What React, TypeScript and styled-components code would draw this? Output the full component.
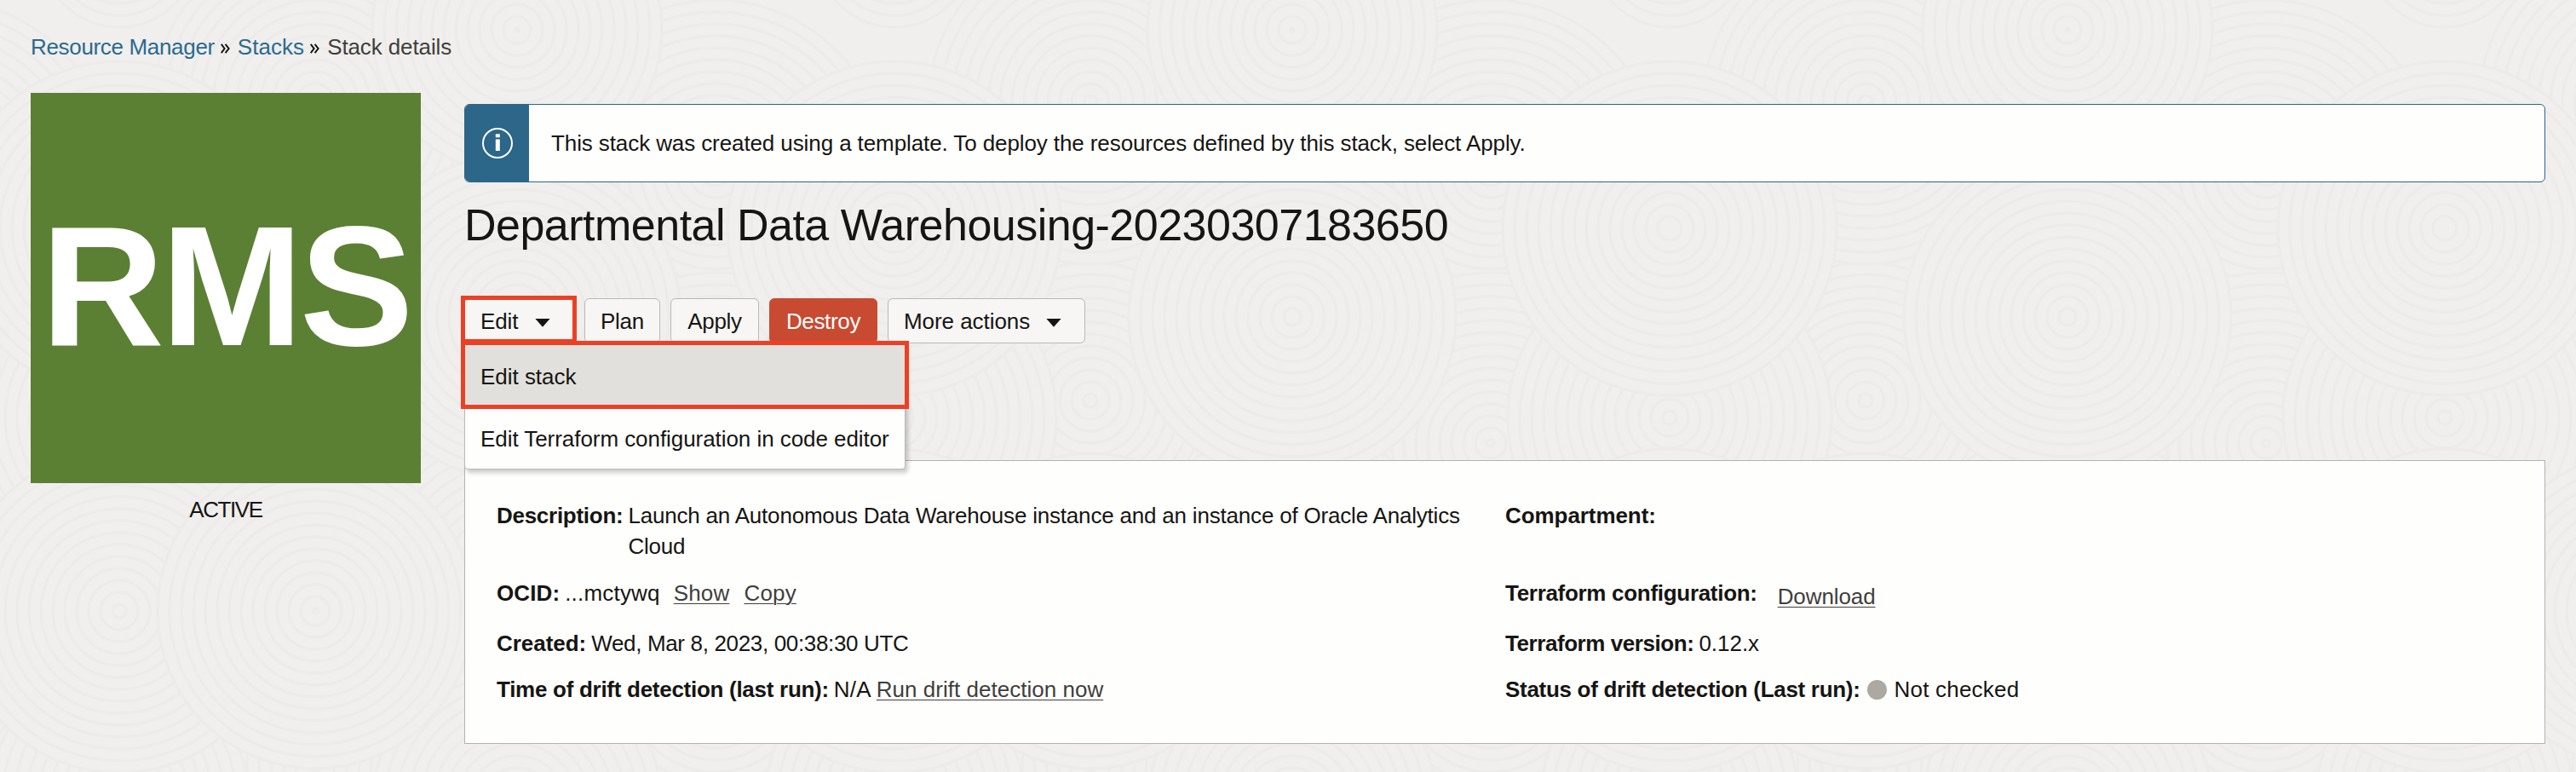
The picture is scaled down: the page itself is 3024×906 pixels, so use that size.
import React from 'react';
import styled, { createGlobalStyle, css } from 'styled-components';

const GlobalStyle = createGlobalStyle`
  *, *::before, *::after { box-sizing: border-box; }
  body {
    margin: 0;
    background: #f0efed;
    color: #161513;
    font-family: "Liberation Sans", Arial, sans-serif;
    font-size: 26px;
    line-height: 36px;
    white-space: nowrap;
  }
`;

const Page = styled.div`
  position: relative;
  isolation: isolate;
  min-height: 906px;
  padding: 37px 36px 33px;
  overflow: hidden;
`;

const Texture = styled.svg`
  position: absolute;
  inset: 0;
  width: 100%;
  height: 100%;
  z-index: -1;
`;

const Text = styled.span<{ $ls?: number }>`
  letter-spacing: ${(p) => p.$ls ?? 0}px;
`;

/* Breadcrumbs */
const Breadcrumbs = styled.nav`
  display: flex;
  align-items: center;
  height: 36px;
`;

const Crumb = styled(Text)<{ $current?: boolean }>`
  color: ${(p) => (p.$current ? '#403e3c' : '#2b6a8f')};
`;

const CrumbArrow = styled.svg`
  width: 11px;
  height: 12px;
  margin: 4px 9px 0 7px;
`;

/* Page columns */
const Columns = styled.div`
  display: flex;
  align-items: flex-start;
  gap: 51px;
  margin-top: 36px;
`;

const Side = styled.aside`
  flex: 0 0 458px;
  text-align: center;
`;

const Badge = styled.div`
  display: flex;
  align-items: center;
  height: 458px;
  padding: 0 0 5px 12px;
  background: #5b8034;
  color: #fff;
  font-weight: 700;
  font-size: 200.5px;
  line-height: 1;
  letter-spacing: -4px;
`;

const State = styled(Text)`
  display: block;
  margin-top: 13px;
`;

const Main = styled.main`
  flex: 1;
  margin-top: 13px;
`;

/* Banner */
const Banner = styled.div`
  display: flex;
  height: 92px;
  border: 1px solid #2c6688;
  border-radius: 6px;
  background: #fefefc;
  overflow: hidden;
`;

const BannerIcon = styled.div`
  display: flex;
  align-items: center;
  justify-content: center;
  width: 75px;
  background: #2c6688;
`;

const BannerText = styled(Text)`
  align-self: center;
  padding-left: 26px;
`;

const Title = styled.h1`
  margin: 20px 0 0;
  font-size: 52px;
  line-height: 60px;
  font-weight: 400;
  letter-spacing: -0.51px;
`;

/* Toolbar */
const Toolbar = styled.div`
  position: relative;
  z-index: 1;
  display: flex;
  gap: 12px;
  margin-top: 56px;
`;

const Button = styled.button<{ $width: number; $ls?: number; $danger?: boolean; $menu?: boolean }>`
  display: flex;
  align-items: center;
  justify-content: center;
  width: ${(p) => p.$width}px;
  height: 53px;
  padding: 1px 0 0;
  border: 1px solid #bbb8b5;
  border-radius: 6px;
  background: #f7f6f4;
  color: inherit;
  font: inherit;
  letter-spacing: ${(p) => p.$ls ?? 0}px;
  ${(p) => p.$menu && css`
    justify-content: space-between;
    padding: 1px 27px 0 18px;
  `}
  ${(p) => p.$danger && css`
    border-color: #c74a31;
    background: #c74a31;
    color: #fff;
  `}
`;

const Caret = styled.svg`
  width: 18px;
  height: 10px;
  margin-top: 3px;
`;

const Highlight = styled.div<{ $top: number; $width: number; $height: number }>`
  position: absolute;
  left: -4px;
  top: ${(p) => p.$top}px;
  width: ${(p) => p.$width}px;
  height: ${(p) => p.$height}px;
  border: 5px solid #ec4025;
`;

const Menu = styled.div`
  position: absolute;
  left: 0;
  top: 54px;
  width: 518px;
  height: 147px;
  border: 1px solid #bbb8b5;
  border-radius: 0 0 4px 4px;
  background: #fefefc;
  box-shadow: 3px 4px 5px rgba(0, 0, 0, 0.2);
  overflow: hidden;
`;

const MenuItem = styled(Text)<{ $active?: boolean }>`
  display: flex;
  align-items: center;
  height: 73px;
  padding-left: 18px;
  background: ${(p) => (p.$active ? '#e2e0dc' : 'transparent')};
`;

/* Details */
const Panel = styled.section`
  display: grid;
  grid-template-columns: 1184px 1fr;
  grid-template-rows: 91px 59px 54px 36px;
  height: 333px;
  margin-top: 137px;
  padding: 46px 35px 0 37px;
  border: 1px solid #b5b2af;
  background: #fefefc;
`;

const Field = styled.div`
  display: flex;
  align-items: flex-start;
  gap: 6px;
`;

const Label = styled(Text)`
  font-weight: 700;
`;

const Value = styled(Text)`
  max-width: 1010px;
  white-space: normal;
`;

const Link = styled.a<{ $ls?: number; $before?: number; $drop?: number }>`
  margin-left: ${(p) => p.$before ?? 0}px;
  margin-top: ${(p) => p.$drop ?? 0}px;
  color: #403e3c;
  letter-spacing: ${(p) => p.$ls ?? 0}px;
  text-decoration: underline;
  text-decoration-thickness: 1px;
  text-underline-offset: 3px;
`;

const Dot = styled.span`
  width: 23px;
  height: 23px;
  margin: 7px 3px 0 2px;
  border-radius: 50%;
  background: #aea8a2;
`;

const TILE = 910;
const DISCS: [number, number, number][] = [
  [370, 470, 190], [840, 200, 200], [840, 520, 200], [370, 120, 190],
  [840, 800, 190], [607, 690, 190], [370, 895, 150], [140, 930, 150],
  [607, 35, 170], [607, 945, 170], [140, -60, 92], [140, 490, 190],
  [607, 372, 192], [140, 268, 196], [140, 717, 190], [370, 717, 185],
];

const Backdrop = () => (
  <Texture aria-hidden="true">
    <defs>
      <pattern id="rings" width={TILE} height={TILE} patternUnits="userSpaceOnUse">
        {DISCS.map(([cx, cy, r], i) => (
          <g key={i} fill="none" stroke="#ecebe9" strokeWidth="3">
            {[-TILE, 0, TILE].map((dx) => (
              <g key={dx}>
                <circle cx={cx + dx} cy={cy} r={r} fill="#f0efed" />
                {Array.from({ length: Math.floor(r / 14) }, (_, n) => (
                  <circle key={n} cx={cx + dx} cy={cy} r={r - 14 * (n + 1)} />
                ))}
              </g>
            ))}
          </g>
        ))}
      </pattern>
    </defs>
    <rect width="100%" height="100%" fill="url(#rings)" />
  </Texture>
);

const Arrow = () => (
  <CrumbArrow viewBox="0 0 11 12" fill="none" stroke="#161513" strokeWidth="2">
    <path d="M0.8 0.8 4.6 6 0.8 11.2M5.6 0.8 9.6 6 5.6 11.2" />
  </CrumbArrow>
);

const DownCaret = () => (
  <Caret viewBox="0 0 18 10" fill="#161513">
    <path d="M0.4 0H17.6L9 9.8Z" />
  </Caret>
);

const InfoIcon = () => (
  <svg width="38" height="38" viewBox="0 0 38 38" fill="none">
    <circle cx="19" cy="19" r="17" stroke="#fff" strokeWidth="2" />
    <path d="M16.8 8.2h5v4h-5zM16.8 14.6h5V28h-5z" fill="#fff" />
  </svg>
);

export default function App() {
  return (
    <>
      <GlobalStyle />
      <Page>
        <Backdrop />
        <Breadcrumbs>
          <Crumb $ls={-0.33}>Resource Manager</Crumb>
          <Arrow />
          <Crumb $ls={0.05}>Stacks</Crumb>
          <Arrow />
          <Crumb $current $ls={-0.11}>Stack details</Crumb>
        </Breadcrumbs>
        <Columns>
          <Side>
            <Badge>RMS</Badge>
            <State $ls={-1.4}>ACTIVE</State>
          </Side>
          <Main>
            <Banner>
              <BannerIcon><InfoIcon /></BannerIcon>
              <BannerText $ls={-0.1}>
                This stack was created using a template. To deploy the resources defined by this stack, select Apply.
              </BannerText>
            </Banner>
            <Title>Departmental Data Warehousing-20230307183650</Title>
            <Toolbar>
              <Button $width={129} $menu $ls={-0.09}>Edit<DownCaret /></Button>
              <Button $width={89} $ls={-0.29}>Plan</Button>
              <Button $width={104} $ls={-0.33}>Apply</Button>
              <Button $width={127} $danger $ls={-0.35}>Destroy</Button>
              <Button $width={232} $menu $ls={-0.06}>More actions<DownCaret /></Button>
              <Menu>
                <MenuItem $active $ls={-0.03}>Edit stack</MenuItem>
                <MenuItem $ls={-0.058}>Edit Terraform configuration in code editor</MenuItem>
              </Menu>
              <Highlight $top={-3} $width={136} $height={56} />
              <Highlight $top={50} $width={526} $height={80} />
            </Toolbar>
            <Panel>
              <Field>
                <Label $ls={-0.275}>Description:</Label>
                <Value $ls={-0.195}>
                  Launch an Autonomous Data Warehouse instance and an instance of Oracle Analytics<br />Cloud
                </Value>
              </Field>
              <Field>
                <Label $ls={-0.07}>Compartment:</Label>
              </Field>
              <Field>
                <Label $ls={0.1}>OCID:</Label>
                <Value $ls={0.2}>...mctywq</Value>
                <Link $before={10} $ls={0.15}>Show</Link>
                <Link $before={11} $ls={0.2}>Copy</Link>
              </Field>
              <Field>
                <Label $ls={-0.3}>Terraform configuration:</Label>
                <Link $before={18} $drop={4} $ls={-0.1}>Download</Link>
              </Field>
              <Field>
                <Label $ls={-0.04}>Created:</Label>
                <Value $ls={-0.34}>Wed, Mar 8, 2023, 00:38:30 UTC</Value>
              </Field>
              <Field>
                <Label $ls={-0.435}>Terraform version:</Label>
                <Value $ls={-0.04}>0.12.x</Value>
              </Field>
              <Field>
                <Label $ls={-0.28}>Time of drift detection (last run):</Label>
                <Value $ls={0.2}>N/A</Value>
                <Link $ls={0.02}>Run drift detection now</Link>
              </Field>
              <Field>
                <Label $ls={-0.297}>Status of drift detection (Last run):</Label>
                <Dot />
                <Value $ls={0.2}>Not checked</Value>
              </Field>
            </Panel>
          </Main>
        </Columns>
      </Page>
    </>
  );
}
